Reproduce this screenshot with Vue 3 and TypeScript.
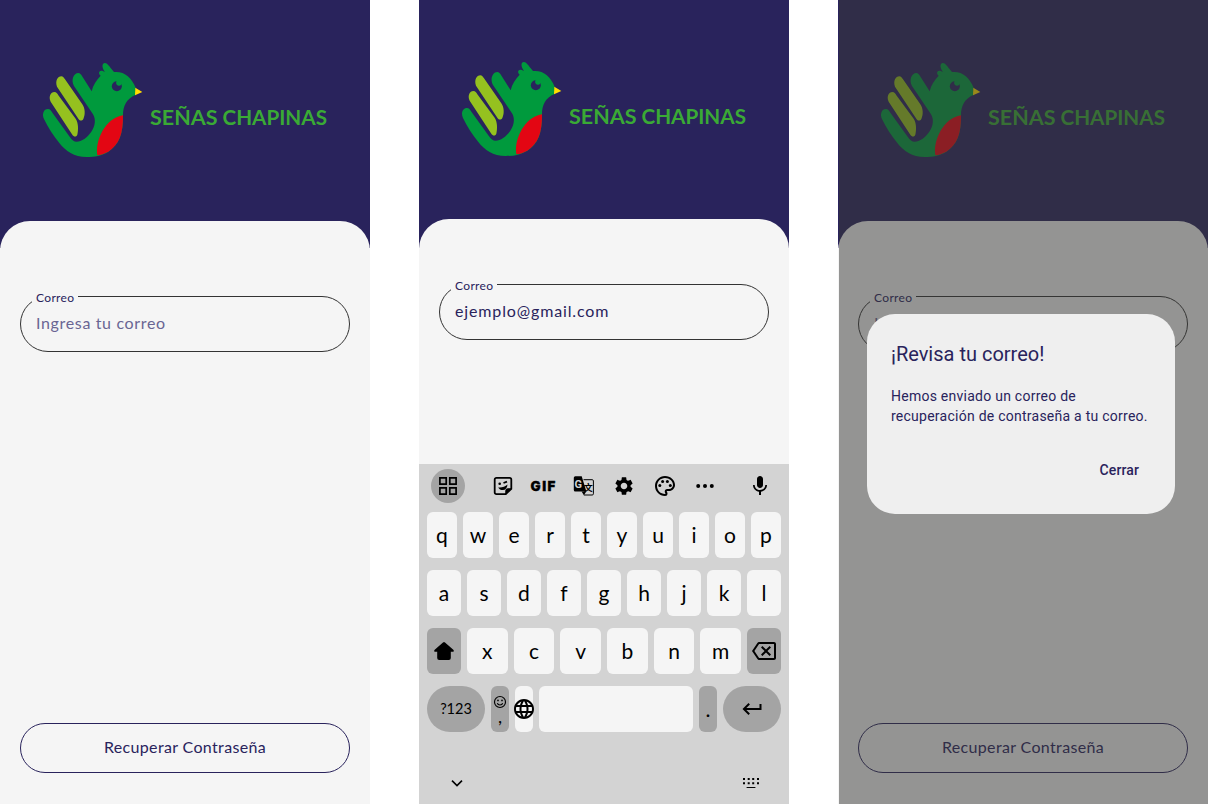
<script setup lang="ts">
interface Screen {
  id: string
  value: string
  filled: boolean
  keyboard: boolean
  dialog: boolean
}

const screens: Screen[] = [
  { id: 'empty', value: 'Ingresa tu correo', filled: false, keyboard: false, dialog: false },
  { id: 'typing', value: 'ejemplo@gmail.com', filled: true, keyboard: true, dialog: false },
  { id: 'sent', value: 'Ingresa tu correo', filled: false, keyboard: false, dialog: true },
]

const rowOne: string[] = 'qwertyuiop'.split('')
const rowTwo: string[] = 'asdfghjkl'.split('')
const rowThree: string[] = 'xcvbnm'.split('')
</script>

<template>
  <main class="board">
    <section v-for="s in screens" :key="s.id" class="phone" :class="s.id">
      <header class="hero">
        <svg class="logo" width="310" height="121" viewBox="0 0 310 121">
          <g transform="scale(0.33333)">
            <path fill="#009a3d" d="M42 207C35 192 41 177 54 177C60 177 63 182 66 187L119 260C126 270 132 275 140 275C155 275 172 262 184 245C196 228 198 208 189 193L132 108C122 90 131 69 145 69C150 69 153 73 156 78L185 124C189 106 199 90 212 77C205 72 206 62 214 62C218 62 221 64 225 66C216 55 214 39 225 39C232 39 236 47 252 66C283 63 304 82 317 113L316 135C290 146 279 168 279 196C280 250 267 285 235 305C215 317 195 321 170 321C132 321 107 303 88 279C70 256 53 231 42 207Z" />
            <path fill="#95c11f" d="M62 155C55 140 62 126 73 126C79 126 82 131 85 136L137 206C146 220 145 240 142 254C140 261 131 261 127 254Z" />
            <path fill="#95c11f" d="M81 110C75 93 83 79 94 79C99 79 102 84 105 88L157 163C166 176 166 195 160 207C157 213 149 213 146 208Z" />
            <path fill="#e30613" d="M279 196C280 250 267 285 235 305C224 311 212 315 202 316C194 273 226 204 279 196Z" />
            <circle cx="260.500" cy="109" r="15" fill="#29235c" />
            <circle cx="267" cy="98.500" r="8.500" fill="#009a3d" />
            <path fill="#ffde00" d="M316 113L337 126L315 136Z" />
          </g>
          <text x="120" y="74.5" textLength="67.5" lengthAdjust="spacingAndGlyphs">SEÑAS</text>
          <text x="192.5" y="74.5" textLength="104.5" lengthAdjust="spacingAndGlyphs">CHAPINAS</text>
        </svg>
      </header>

      <div class="sheet">
        <div class="field">
          <span class="label">Correo</span>
          <span class="value" :class="{ filled: s.filled }">{{ s.value }}</span>
        </div>
        <button v-if="!s.keyboard" class="recover">Recuperar Contraseña</button>
      </div>

      <div v-if="s.keyboard" class="keyboard">
        <div class="tools">
          <span class="round">
            <svg width="20" height="20" viewBox="0 0 20 20" fill="none" stroke="#000" stroke-width="1.7">
              <path d="M1.9 1.9h6.3v6.3H1.9zM11.8 1.9h6.3v6.3h-6.3zM1.9 11.8h6.3v6.3H1.9zM11.8 11.8h6.3v6.3h-6.3z" />
            </svg>
          </span>
          <span class="tool sticker">
            <svg width="20" height="20" viewBox="0 0 20 20" fill="none" stroke="#000" stroke-width="1.8">
              <path d="M3.4 1.8h13.2a1.7 1.7 0 0 1 1.7 1.7v9.3l-5.5 5.4H3.4a1.7 1.7 0 0 1-1.7-1.7v-13a1.7 1.7 0 0 1 1.7-1.7z" />
              <path d="M18.2 12.8h-3.7a1.7 1.7 0 0 0-1.7 1.7v3.7z" fill="#000" stroke-width="1" />
              <circle cx="6.7" cy="7.7" r="1.3" fill="#000" stroke="none" />
              <path d="M10.500 7l3.500-1.400" stroke-width="1.8" />
              <path d="M5.2 11.500c3.900.3 6.800-.5 9.300-2.900-.2 3.500-2 5.500-4.700 5.500-2.100 0-3.700-.9-4.600-2.600z" fill="#000" stroke="none" />
            </svg>
          </span>
          <span class="tool">
            <svg width="28" height="20" viewBox="0 0 28 20" fill="none" stroke="#000" stroke-width="3">
              <text class="gif" x="1.6" y="15" textLength="24.800" lengthAdjust="spacing">GIF</text>
            </svg>
          </span>
          <span class="tool">
            <svg width="22" height="22" viewBox="0 0 22 22">
              <path d="M10.500 4.700h8.700a1.200 1.200 0 0 1 1.200 1.200v12.900a1.200 1.200 0 0 1-1.200 1.200h-8.300" fill="none" stroke="#000" stroke-width="1" />
              <path d="M2.300 1.300h6.400l4.700 15.200H2.300A1.500 1.500 0 0 1 .8 15V2.800a1.500 1.500 0 0 1 1.500-1.500z" />
              <path d="M8.600 16.500h4.700l-2.400 3.700z" />
              <text class="tr-g" x="1.500" y="12.700">G</text>
              <text class="tr-w" x="10.800" y="16">文</text>
            </svg>
          </span>
          <span class="tool">
            <svg width="22" height="22" viewBox="0 0 24 24">
              <path d="M19.140 12.940c.04-.3.06-.61.06-.94 0-.32-.02-.64-.07-.94l2.030-1.580c.18-.14.23-.41.12-.61l-1.920-3.320c-.12-.22-.37-.29-.59-.22l-2.390.96c-.5-.38-1.030-.7-1.620-.94L14.400 2.810c-.04-.24-.24-.41-.48-.41h-3.840c-.24 0-.43.17-.47.41L9.250 5.350c-.59.24-1.130.57-1.620.94L5.240 5.330c-.22-.08-.47 0-.59.22L2.740 8.870c-.12.21-.08.47.12.61l2.030 1.580c-.05.3-.09.63-.09.94s.02.64.07.94l-2.030 1.580c-.18.14-.23.41-.12.61l1.920 3.320c.12.22.37.29.59.22l2.390-.96c.5.38 1.030.7 1.620.94l.36 2.540c.05.24.24.41.48.41h3.840c.24 0 .44-.17.47-.41l.36-2.540c.59-.24 1.130-.56 1.620-.94l2.390.96c.22.08.47 0 .59-.22l1.920-3.320c.12-.22.07-.47-.12-.61l-2.010-1.580zM12 15.600c-1.980 0-3.600-1.620-3.600-3.600s1.620-3.600 3.600-3.600 3.600 1.620 3.600 3.600-1.620 3.600-3.600 3.600z" />
            </svg>
          </span>
          <span class="tool">
            <svg width="24" height="24" viewBox="0 0 24 24">
              <path d="M12 22C6.490 22 2 17.510 2 12S6.490 2 12 2s10 4.040 10 9c0 3.310-2.690 6-6 6h-1.770c-.28 0-.5.22-.5.5 0 .12.05.23.13.33.41.47.64 1.060.64 1.670A2.500 2.500 0 0 1 12 22zm0-18c-4.410 0-8 3.590-8 8s3.590 8 8 8c.28 0 .5-.22.5-.5a.54.54 0 0 0-.14-.35c-.41-.46-.63-1.050-.63-1.650a2.500 2.500 0 0 1 2.500-2.500H16c2.210 0 4-1.790 4-4 0-3.860-3.590-7-8-7z" />
              <circle cx="6.800" cy="11.500" r="1.500" /><circle cx="9.600" cy="7.600" r="1.500" />
              <circle cx="14.400" cy="7.600" r="1.500" /><circle cx="17.300" cy="11.500" r="1.500" />
            </svg>
          </span>
          <span class="tool">
            <svg width="20" height="20" viewBox="0 0 20 20">
              <circle cx="3.200" cy="10" r="2" /><circle cx="10" cy="10" r="2" /><circle cx="16.800" cy="10" r="2" />
            </svg>
          </span>
          <span class="tool mic">
            <svg width="24" height="24" viewBox="0 0 24 24">
              <path d="M12 14c1.660 0 2.990-1.340 2.990-3L15 5c0-1.660-1.340-3-3-3S9 3.340 9 5v6c0 1.660 1.340 3 3 3zm5.300-3c0 3-2.540 5.100-5.300 5.100S6.700 14 6.700 11H5c0 3.410 2.720 6.230 6 6.720V21h2v-3.280c3.280-.48 6-3.300 6-6.720h-1.700z" />
            </svg>
          </span>
        </div>

        <div class="row">
          <span v-for="k in rowOne" :key="k" class="key">{{ k }}</span>
        </div>
        <div class="row">
          <span v-for="k in rowTwo" :key="k" class="key">{{ k }}</span>
        </div>
        <div class="row">
          <span class="key dark fixed">
            <svg width="22" height="20" viewBox="0 0 22 20">
              <path d="M10 1.400a1.500 1.500 0 0 1 2 0l8.300 7.300c1 .9.500 2.100-.7 2.100h-1.800v6.200a2 2 0 0 1-2 2H6.200a2 2 0 0 1-2-2v-6.200H2.400c-1.200 0-1.700-1.200-.7-2.100z" />
            </svg>
          </span>
          <span v-for="k in rowThree" :key="k" class="key">{{ k }}</span>
          <span class="key dark fixed">
            <svg width="24" height="24" viewBox="0 0 24 24">
              <path d="M22 3H7c-.69 0-1.230.35-1.590.88L0 12l5.410 8.110c.36.53.9.89 1.590.89h15c1.100 0 2-.9 2-2V5c0-1.100-.9-2-2-2zm0 16H7.070L2.400 12l4.660-7H22v14zm-11.590-2L14 13.410 17.590 17 19 15.590 15.410 12 19 8.410 17.590 7 14 10.590 10.410 7 9 8.410 12.590 12 9 15.590z" />
            </svg>
          </span>
        </div>
        <div class="row">
          <span class="key dark pill">?123</span>
          <span class="key dark narrow stack">
            <svg width="14" height="14" viewBox="0 0 14 14" fill="none" stroke="#000" stroke-width="1.150">
              <circle cx="7" cy="7" r="5.500" />
              <path d="M4.300 8.300c.9 2.300 4.500 2.300 5.400 0" />
              <circle cx="5" cy="5.400" r=".85" fill="#000" stroke="none" /><circle cx="9" cy="5.400" r=".85" fill="#000" stroke="none" />
            </svg>
            <span class="comma">,</span>
          </span>
          <span class="key narrow">
            <svg width="24" height="24" viewBox="0 0 24 24">
              <path d="M11.990 2C6.470 2 2 6.480 2 12s4.470 10 9.990 10C17.520 22 22 17.520 22 12S17.520 2 11.990 2zm6.930 6h-2.950a15.650 15.650 0 0 0-1.380-3.560A8.030 8.030 0 0 1 18.920 8zM12 4.040c.83 1.200 1.480 2.530 1.910 3.960h-3.820c.43-1.430 1.080-2.760 1.910-3.960zM4.260 14C4.100 13.360 4 12.690 4 12s.1-1.360.26-2h3.380c-.08.66-.14 1.320-.14 2 0 .68.06 1.340.14 2H4.260zm.82 2h2.950c.32 1.250.78 2.450 1.380 3.560A7.987 7.987 0 0 1 5.080 16zm2.950-8H5.080a7.987 7.987 0 0 1 4.330-3.560A15.650 15.650 0 0 0 8.030 8zM12 19.960c-.83-1.200-1.480-2.530-1.910-3.960h3.820c-.43 1.430-1.080 2.760-1.910 3.960zM14.340 14H9.660c-.09-.66-.16-1.320-.16-2 0-.68.07-1.350.16-2h4.680c.09.65.16 1.320.16 2 0 .68-.07 1.340-.16 2zm.25 5.560c.6-1.110 1.060-2.310 1.380-3.560h2.950a8.030 8.030 0 0 1-4.330 3.560zM16.360 14c.08-.66.14-1.320.14-2 0-.68-.06-1.340-.14-2h3.380c.16.64.26 1.310.26 2s-.1 1.360-.26 2h-3.380z" />
            </svg>
          </span>
          <span class="key space"></span>
          <span class="key dark narrow dot">.</span>
          <span class="key dark pill">
            <svg width="24" height="24" viewBox="0 0 24 24">
              <path d="M19.500 7v4H6.330l3.580-3.590L8.500 6l-6 6 6 6 1.410-1.410L6.330 13H21.500V7z" />
            </svg>
          </span>
        </div>
        <div class="nav">
          <svg width="14" height="10" viewBox="0 0 14 10" fill="none" stroke="#000" stroke-width="1.600">
            <path d="M2 2.600l5 5 5-5" />
          </svg>
          <svg width="18" height="12" viewBox="0 0 18 12">
            <path d="M1 1h2v2H1zM5.700 1h2v2h-2zM10.200 1h2v2h-2zM15 1h2v2h-2zM1 5.300h2v2H1zM5.700 5.300h2v2h-2zM10.200 5.300h2v2h-2zM15 5.300h2v2h-2zM4.600 9.900h8.800v1.100H4.600z" />
          </svg>
        </div>
      </div>

      <div v-if="s.dialog" class="scrim">
        <div class="dialog">
          <h2>¡Revisa tu correo!</h2>
          <p>Hemos enviado un correo de recuperación de contraseña a tu correo.</p>
          <button class="close">Cerrar</button>
        </div>
      </div>
    </section>
  </main>
</template>

<style>
body {
  background: #fff;
  overflow: hidden;
}
</style>

<style scoped>
.board {
  display: flex;
  justify-content: space-between;
  width: 1208px;
  height: 804px;
  overflow: hidden;
}
.phone {
  position: relative;
  display: flex;
  flex-direction: column;
  width: 370px;
  height: 804px;
  overflow: hidden;
  background: linear-gradient(#29235c 248px, #f5f5f5 248px);
  color: #29235c;
  font-family: Lato, "Noto Sans", sans-serif;
}
.hero {
  flex: none;
  height: 221px;
  display: flex;
  align-items: center;
  padding-left: 30px;
  box-sizing: border-box;
}
.typing .hero {
  height: 219px;
}
.logo {
  display: block;
}
.logo text {
  font: 700 20px Lato, "Noto Sans", sans-serif;
  fill: #3aaa35;
}
.sheet {
  flex: 1;
  display: flex;
  flex-direction: column;
  padding: 75px 20px 31px;
  border-radius: 30px 30px 0 0;
  background: #f5f5f5;
}
.typing .sheet {
  padding-top: 65px;
}
.field {
  position: relative;
  flex: none;
  display: flex;
  align-items: center;
  height: 56px;
  box-sizing: border-box;
  padding: 0 15px 2px;
  border: 1px solid #333;
  border-radius: 28px;
}
.label {
  position: absolute;
  left: 11px;
  top: -7px;
  padding: 0 4px;
  background: #f5f5f5;
  font-size: 12px;
  line-height: 16px;
  letter-spacing: 0.35px;
}
.value {
  font-size: 16px;
  line-height: 24px;
  letter-spacing: 0.65px;
  color: #696593;
}
.value.filled {
  color: #29235c;
  letter-spacing: 0.86px;
}
.recover {
  height: 50px;
  margin-top: auto;
  padding: 0 0 3px;
  border: 1px solid #29235c;
  border-radius: 25px;
  background: none;
  color: #29235c;
  font: 400 16px Lato, "Noto Sans", sans-serif;
  letter-spacing: 0.35px;
}
.keyboard {
  flex: none;
  height: 340px;
  box-sizing: border-box;
  padding: 0 8px;
  display: flex;
  flex-direction: column;
  background: #d3d3d3;
  color: #000;
}
.keyboard svg {
  display: block;
  flex: none;
}
.tools {
  flex: none;
  display: flex;
  align-items: center;
  height: 44px;
  padding-left: 4px;
  margin-bottom: 4px;
}
.round {
  width: 34px;
  height: 34px;
  border-radius: 50%;
  background: #a4a4a4;
  display: flex;
  align-items: center;
  justify-content: center;
}
.tool {
  display: flex;
  justify-content: center;
  width: 40.4px;
}
.sticker {
  margin-left: 17.8px;
}
.mic {
  margin-left: 14.6px;
}
.gif {
  font: 900 13.4px Inter, sans-serif;
  fill: #000;
  stroke: #000;
  stroke-width: 0.3;
}
.tr-g {
  font: 700 11px Roboto, sans-serif;
  fill: #d3d3d3;
}
.tr-w {
  font: 700 9px "Noto Sans CJK SC", sans-serif;
}
.row {
  flex: none;
  display: flex;
  gap: 6px;
  height: 46px;
  margin-bottom: 12px;
}
.key {
  flex: 1 1 0;
  min-width: 0;
  display: flex;
  align-items: center;
  justify-content: center;
  border-radius: 6px;
  background: #f5f5f5;
  font-size: 21px;
  line-height: 46px;
}
.key.dark {
  background: #a4a4a4;
}
.key.fixed {
  flex: 0 0 34px;
}
.key.pill {
  flex: 0 0 58px;
  border-radius: 23px;
  font-size: 14.5px;
}
.key.narrow {
  flex: 0 0 18px;
}
.key.stack {
  flex-direction: column;
  justify-content: flex-start;
  padding-top: 9px;
  box-sizing: border-box;
}
.comma {
  font-size: 18px;
  line-height: 14px;
}
.nav {
  flex: 1;
  display: flex;
  align-items: center;
  justify-content: space-between;
  padding: 18px 21px 0 23px;
}
.scrim {
  position: absolute;
  inset: 0 0 0 0.5px;
  background: rgba(54, 54, 52, 0.51);
}
.dialog {
  display: flex;
  flex-direction: column;
  width: 308px;
  height: 200px;
  box-sizing: border-box;
  margin: 314px 0 0 28.5px;
  padding: 28px 24px 24px;
  border-radius: 28px;
  background: #efefef;
  font-family: Roboto, sans-serif;
}
h2 {
  margin: 0 0 20px;
  font-size: 20px;
  font-weight: 400;
  line-height: 24px;
}
p {
  margin: 0;
  font-size: 14px;
  line-height: 20px;
  letter-spacing: 0.25px;
}
.close {
  align-self: flex-end;
  margin: 34px 12px 0 0;
  padding: 0;
  border: 0;
  background: none;
  color: #29235c;
  font: 500 14px/20px Roboto, sans-serif;
  letter-spacing: 0.1px;
}
</style>
